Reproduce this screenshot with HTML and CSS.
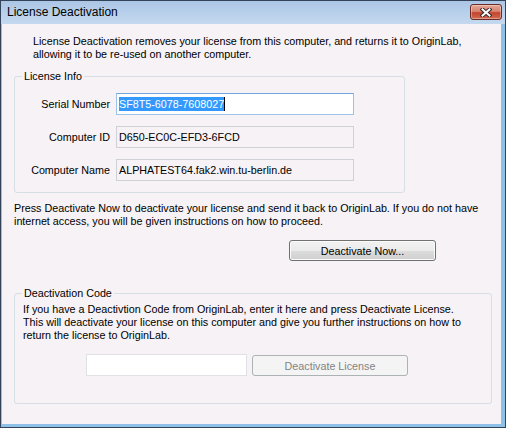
FILE: index.html
```html
<!DOCTYPE html>
<html lang="en">
<head>
  <meta charset="UTF-8" />
  <title>License Deactivation</title>
  <link rel="stylesheet" href="styles.css">
</head>
<body>

  <div class="window">
    <!-- Title bar -->
    <div class="titlebar">
      <span class="title">License Deactivation</span>
      <button class="close-btn" title="Close">
        <svg width="12" height="9" viewBox="0 0 12 9">
          <path d="M2.5 1.5 L9.5 7.5 M9.5 1.5 L2.5 7.5" stroke="#3a2b2b" stroke-width="4" stroke-linecap="square" fill="none" />
          <path d="M2.5 1.5 L9.5 7.5 M9.5 1.5 L2.5 7.5" stroke="#ffffff" stroke-width="2" stroke-linecap="square" fill="none" />
        </svg>
      </button>
    </div>

    <div class="frame">
      <div class="client">
        <p class="intro">License Deactivation removes your license from this computer, and returns it to OriginLab,<br>allowing it to be re-used on another computer.</p>

        <fieldset class="group info-group">
          <legend>License Info</legend>
          <div class="fields">
            <label>Serial Number</label>
            <div class="edit focused"><span class="selected">SF8T5-6078-7608027</span><span class="caret"></span></div>

            <label>Computer ID</label>
            <div class="edit readonly">D650-EC0C-EFD3-6FCD</div>

            <label>Computer Name</label>
            <div class="edit readonly">ALPHATEST64.fak2.win.tu-berlin.de</div>
          </div>
        </fieldset>

        <p class="note">Press Deactivate Now to deactivate your license and send it back to OriginLab. If you do not have<br>internet access, you will be given instructions on how to proceed.</p>

        <div class="actions">
          <button class="btn now-btn">Deactivate Now...</button>
        </div>

        <fieldset class="group code-group">
          <legend>Deactivation Code</legend>
          <p class="code-text">If you have a Deactivtion Code from OriginLab, enter it here and press Deactivate License.<br>This will deactivate your license on this computer and give you further instructions on how to<br>return the license to OriginLab.</p>
          <div class="code-row">
            <div class="edit code-input"></div>
            <button class="btn license-btn" disabled>Deactivate License</button>
          </div>
        </fieldset>
      </div>
    </div>
  </div>

</body>
</html>
```

FILE: styles.css
```css
body {
  margin: 0;
  font-family: "Liberation Sans", Arial, sans-serif;
  font-size: 10.75px;
  line-height: 13px;
  color: #000;
}

p {
  margin: 0;
}

.window {
  width: 506px;
  height: 428px;
  box-sizing: border-box;
  display: flex;
  flex-direction: column;
  background: #8fc0e8;
  border: 1px solid #33435a;
}

/* title bar */
.titlebar {
  height: 23px;
  display: flex;
  justify-content: space-between;
  padding-left: 6px;
  background: linear-gradient(#abc6e5, #c4d9ef);
}

.title {
  font-size: 12px;
  line-height: 23px;
}

.close-btn {
  width: 32px;
  height: 16px;
  margin: 3px 3px 0 0;
  padding: 0;
  display: flex;
  align-items: center;
  justify-content: center;
  border: 1px solid #6a2b24;
  border-radius: 3px;
  background: linear-gradient(#e5a696 0%, #d88470 45%, #c4452e 55%, #d06a52 100%);
  box-shadow: inset 0 0 0 1px rgba(255, 255, 255, 0.35);
}

/* client area */
.frame {
  flex: 1;
  display: flex;
  padding: 0 4px 3px 1px;
}

.client {
  flex: 1;
  background: #f6f2f6;
  padding-top: 11px;
}

.intro {
  margin-left: 31px;
}

.group {
  margin: 9px 0 0 12px;
  border: 1px solid #d5dfe5;
  border-radius: 3px;
  box-sizing: border-box;
}

.group legend {
  margin-left: 7px;
  padding: 0 2px;
}

.info-group {
  width: 391px;
  padding: 10px 0 11px 0;
}

.fields {
  display: grid;
  grid-template-columns: 95px 238px;
  column-gap: 6px;
  row-gap: 11px;
}

.fields label {
  text-align: right;
  align-self: center;
}

.edit {
  height: 22px;
  box-sizing: border-box;
  display: flex;
  align-items: center;
  padding-left: 2px;
  border: 1px solid #c9cdd3;
  background: #fff;
}

.edit.readonly {
  background: #f6f2f6;
  border-color: #cfd1d6;
}

.edit.focused {
  border-color: #9ac3ea;
  border-top-color: #6fa6dc;
}

.selected {
  background: #3399ff;
  color: #fff;
  line-height: 14px;
}

.caret {
  width: 1px;
  height: 14px;
  background: #000;
}

.note {
  margin: 9px 0 0 12px;
}

.actions {
  margin-top: 12px;
  padding-left: 287px;
}

.btn {
  font-family: inherit;
  font-size: 10.75px;
  color: #000;
  padding: 0;
  border: 1px solid #707070;
  border-radius: 3px;
  background: linear-gradient(#f2f2f2 0%, #ebebeb 50%, #dddddd 50%, #cfcfcf 100%);
  box-shadow: inset 0 0 0 1px #fbfbfb;
}

.now-btn {
  width: 147px;
  height: 21px;
}

.code-group {
  width: 478px;
  margin-top: 26px;
  padding: 3px 0 27px 0;
}

.code-text {
  margin-left: 8px;
}

.code-row {
  display: flex;
  align-items: flex-end;
  gap: 5px;
  margin: 12px 0 0 71px;
}

.code-input {
  width: 161px;
  border-color: #dfe1e5;
}

.license-btn {
  width: 156px;
  height: 21px;
}

.btn:disabled {
  color: #838383;
  border-color: #adb2b5;
  background: #f4f4f4;
  box-shadow: none;
}
```
